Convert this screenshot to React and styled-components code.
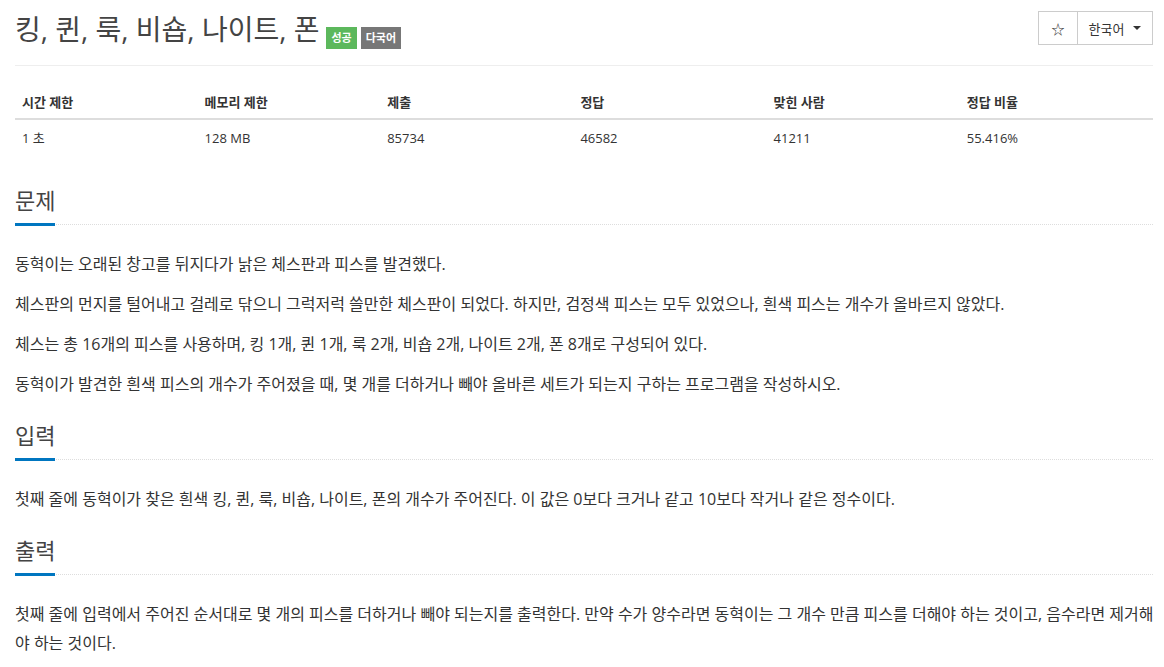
import React from "react";
import styled, { createGlobalStyle } from "styled-components";

const GlobalStyle = createGlobalStyle`
  body {
    margin: 0;
    background: #fff;
    font-family: "Open Sans", "Noto Sans CJK KR", sans-serif;
    color: #333;
  }
`;

const Page = styled.div`
  padding: 0 11px 0 15px;
`;

const TitleBar = styled.div`
  display: flex;
  align-items: flex-start;
  justify-content: space-between;
  padding-top: 11px;
  padding-bottom: 18px;
  border-bottom: 1px solid #eee;
`;

const Title = styled.h1`
  margin: 0;
  font-size: 28px;
  font-weight: 400;
  line-height: 36px;
  color: #444;
  display: flex;
  align-items: baseline;
  gap: 4px;
`;

const TitleText = styled.span`
  margin-right: 3px;
`;

const Label = styled.span`
  display: inline-block;
  background: ${(p) => p.bg};
  color: #fff;
  font-size: 11px;
  font-weight: 700;
  line-height: 22px;
  padding: 0 5px;
  position: relative;
  top: 2px;
`;

const BtnGroup = styled.div`
  display: flex;
`;

const Btn = styled.button`
  font-family: inherit;
  background: #fff;
  border: 1px solid #ccc;
  margin-left: -1px;
  height: 34px;
  padding: 0 ${(p) => (p.wide ? "9px" : "0")};
  width: ${(p) => (p.wide ? "76px" : "40px")};
  font-size: 13px;
  color: #333;
  display: flex;
  align-items: center;
  justify-content: center;
  gap: 9px;
`;

const Caret = styled.span`
  width: 0;
  height: 0;
  border-left: 4px solid transparent;
  border-right: 4px solid transparent;
  border-top: 4px solid #333;
`;

const Table = styled.table`
  width: 100%;
  border-collapse: collapse;
  margin-top: 19px;
  font-size: 13px;
  table-layout: fixed;
`;

const Th = styled.th`
  text-align: left;
  font-weight: 700;
  padding: 7px 7px 6px;
  line-height: 20px;
  border-bottom: 2px solid #ddd;
  width: ${(p) => p.w};
`;

const Td = styled.td`
  padding: 8px 7px 7px;
  line-height: 20px;
  color: #333;
`;

const Section = styled.section`
  margin-top: ${(p) => p.top || "21px"};
`;

const Headline = styled.h2`
  margin: 0 0 25px;
  font-size: 22px;
  font-weight: 400;
  line-height: 30px;
  color: #444;
  border-bottom: 1px dotted #ddd;
`;

const HeadlineText = styled.span`
  display: inline-block;
  padding-bottom: 8px;
  border-bottom: 3px solid #0076c0;
  margin-bottom: -2px;
`;

const Paragraph = styled.p`
  margin: 0 -4px 11px 0;
  font-size: 16px;
  line-height: 29px;
  color: #333;
  word-break: break-all;
`;

const stats = {
  head: ["시간 제한", "메모리 제한", "제출", "정답", "맞힌 사람", "정답 비율"],
  widths: ["16%", "16%", "17%", "17%", "17%", "17%"],
  row: ["1 초", "128 MB", "85734", "46582", "41211", "55.416%"],
};

export default function App() {
  return (
    <Page>
      <GlobalStyle />
      <TitleBar>
        <Title>
          <TitleText>킹, 퀸, 룩, 비숍, 나이트, 폰</TitleText>
          <Label bg="#5cb85c">성공</Label>
          <Label bg="#777">다국어</Label>
        </Title>
        <BtnGroup>
          <Btn>☆</Btn>
          <Btn wide>
            한국어
            <Caret />
          </Btn>
        </BtnGroup>
      </TitleBar>

      <Table>
        <thead>
          <tr>
            {stats.head.map((h, i) => (
              <Th key={h} w={stats.widths[i]}>
                {h}
              </Th>
            ))}
          </tr>
        </thead>
        <tbody>
          <tr>
            {stats.row.map((c) => (
              <Td key={c}>{c}</Td>
            ))}
          </tr>
        </tbody>
      </Table>

      <Section top="30px">
        <Headline>
          <HeadlineText>문제</HeadlineText>
        </Headline>
        <Paragraph>동혁이는 오래된 창고를 뒤지다가 낡은 체스판과 피스를 발견했다.</Paragraph>
        <Paragraph>
          체스판의 먼지를 털어내고 걸레로 닦으니 그럭저럭 쓸만한 체스판이 되었다. 하지만, 검정색 피스는 모두 있었으나, 흰색 피스는 개수가 올바르지 않았다.
        </Paragraph>
        <Paragraph>
          체스는 총 16개의 피스를 사용하며, 킹 1개, 퀸 1개, 룩 2개, 비숍 2개, 나이트 2개, 폰 8개로 구성되어 있다.
        </Paragraph>
        <Paragraph>
          동혁이가 발견한 흰색 피스의 개수가 주어졌을 때, 몇 개를 더하거나 빼야 올바른 세트가 되는지 구하는 프로그램을 작성하시오.
        </Paragraph>
      </Section>

      <Section>
        <Headline>
          <HeadlineText>입력</HeadlineText>
        </Headline>
        <Paragraph>
          첫째 줄에 동혁이가 찾은 흰색 킹, 퀸, 룩, 비숍, 나이트, 폰의 개수가 주어진다. 이 값은 0보다 크거나 같고 10보다 작거나 같은 정수이다.
        </Paragraph>
      </Section>

      <Section>
        <Headline>
          <HeadlineText>출력</HeadlineText>
        </Headline>
        <Paragraph>
          첫째 줄에 입력에서 주어진 순서대로 몇 개의 피스를 더하거나 빼야 되는지를 출력한다. 만약 수가 양수라면 동혁이는 그 개수 만큼 피스를 더해야 하는 것이고, 음수라면 제거해야 하는 것이다.
        </Paragraph>
      </Section>
    </Page>
  );
}
